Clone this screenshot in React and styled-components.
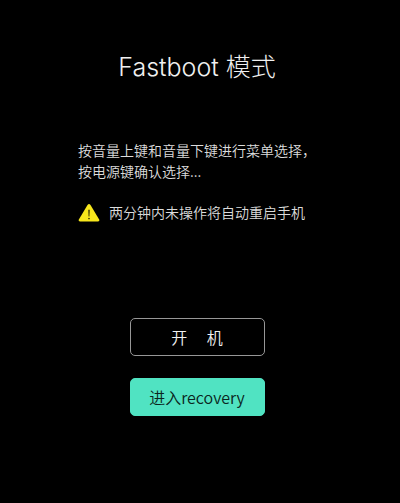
import React, { Component } from 'react';
import styled, { createGlobalStyle } from 'styled-components';

const GlobalStyle = createGlobalStyle`
  * {
    box-sizing: border-box;
  }

  body {
    margin: 0;
    background: #000;
    font-family: "Noto Sans CJK SC", sans-serif;
    font-weight: 350;
  }
`;

const Screen = styled.main`
  display: flex;
  flex-direction: column;
  align-items: center;
  min-height: 100vh;
  padding: 49px 6px 48px 0;
  color: #dcdcdc;
`;

const Title = styled.h1`
  margin: 0 0 55px;
  color: #f0f0f0;
  font-family: Inter, "Noto Sans CJK SC", sans-serif;
  font-size: 25px;
  font-weight: 300;
  line-height: 36px;
`;

const Message = styled.div`
  margin-bottom: 95px;
  font-size: 14px;
  line-height: 21px;
`;

const Hint = styled.p`
  margin: 0 0 20px;
`;

const Warning = styled.p`
  display: flex;
  align-items: center;
  gap: 9px;
  margin: 0;
`;

const Menu = styled.nav`
  display: flex;
  flex-direction: column;
  gap: 22px;
`;

const MenuButton = styled.button`
  min-width: 135px;
  height: 38px;
  padding: 0 16px;
  border: 1px solid ${props => (props.$selected ? '#50e3c2' : '#979797')};
  border-radius: 5px;
  background: ${props => (props.$selected ? '#50e3c2' : '#000')};
  color: ${props => (props.$selected ? '#0b2620' : '#f0f0f0')};
  font-family: inherit;
  font-size: 16px;
  font-weight: inherit;
  line-height: 24px;
`;

const WarningIcon = () => (
  <svg width="22" height="20" viewBox="0 0 22 20" aria-hidden="true">
    <path
      d="M9.5 1.9 Q11 0 12.5 1.9 L21 16.2 Q22 18.4 19.8 18.4 H2.2 Q0 18.4 1 16.2 Z"
      fill="#f8e71c"
    />
    <path d="M10.3 6.8 H11.7 L11.4 13.6 H10.6 Z" fill="#2a2705" />
    <circle cx="11" cy="15.6" r="0.8" fill="#2a2705" />
  </svg>
);

class App extends Component {
  render() {
    return (
      <Screen>
        <GlobalStyle />
        <Title>Fastboot 模式</Title>
        <Message>
          <Hint>
            按音量上键和音量下键进行菜单选择，<br />
            按电源键确认选择...
          </Hint>
          <Warning>
            <WarningIcon />
            两分钟内未操作将自动重启手机
          </Warning>
        </Message>
        <Menu>
          <MenuButton type="button">开{'\u2003\u00a0'}机</MenuButton>
          <MenuButton type="button" $selected>进入recovery</MenuButton>
        </Menu>
      </Screen>
    );
  }
}

export default App;
